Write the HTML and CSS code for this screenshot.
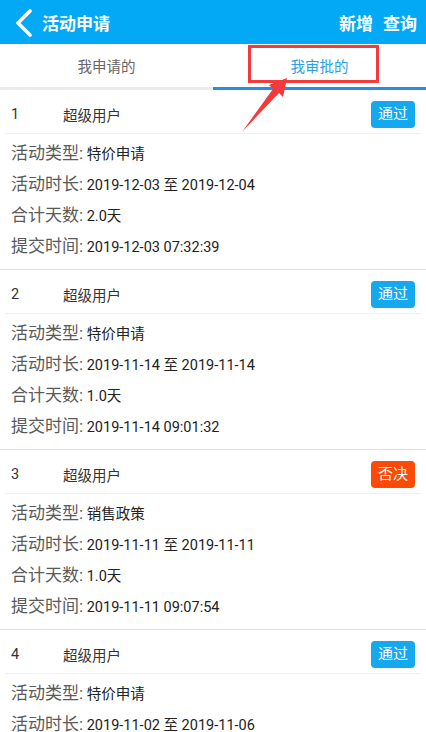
FILE: index.html
```html
<!DOCTYPE html>
<html lang="zh-CN">
<head>
    <meta charset="UTF-8">
    <meta name="viewport" content="width=device-width, initial-scale=1.0">
    <title>活动申请</title>
    <link rel="stylesheet" href="styles.css">
</head>
<body>
    <div id="top-bar">
        <div class="title">
            <svg class="back" width="20" height="28" viewBox="0 0 20 28">
                <path d="M16 2 L4 14 L16 26" fill="none" stroke="#fff" stroke-width="3.6" stroke-linecap="round" stroke-linejoin="round"/>
            </svg>
            <span>活动申请</span>
        </div>
        <div class="actions">
            <span>新增</span>
            <span>查询</span>
        </div>
    </div>

    <div id="tabs">
        <div class="tab">我申请的</div>
        <div class="tab active">我审批的</div>
    </div>

    <div id="list">
        <div class="card">
            <div class="card-head">
                <span class="num">1</span>
                <span class="user">超级用户</span>
                <span class="badge pass">通过</span>
            </div>
            <div class="card-body">
                <div class="row"><span class="label">活动类型:</span> 特价申请</div>
                <div class="row"><span class="label">活动时长:</span> 2019-12-03 至 2019-12-04</div>
                <div class="row"><span class="label">合计天数:</span> 2.0天</div>
                <div class="row"><span class="label">提交时间:</span> 2019-12-03 07:32:39</div>
            </div>
        </div>
        <div class="card">
            <div class="card-head">
                <span class="num">2</span>
                <span class="user">超级用户</span>
                <span class="badge pass">通过</span>
            </div>
            <div class="card-body">
                <div class="row"><span class="label">活动类型:</span> 特价申请</div>
                <div class="row"><span class="label">活动时长:</span> 2019-11-14 至 2019-11-14</div>
                <div class="row"><span class="label">合计天数:</span> 1.0天</div>
                <div class="row"><span class="label">提交时间:</span> 2019-11-14 09:01:32</div>
            </div>
        </div>
        <div class="card">
            <div class="card-head">
                <span class="num">3</span>
                <span class="user">超级用户</span>
                <span class="badge reject">否决</span>
            </div>
            <div class="card-body">
                <div class="row"><span class="label">活动类型:</span> 销售政策</div>
                <div class="row"><span class="label">活动时长:</span> 2019-11-11 至 2019-11-11</div>
                <div class="row"><span class="label">合计天数:</span> 1.0天</div>
                <div class="row"><span class="label">提交时间:</span> 2019-11-11 09:07:54</div>
            </div>
        </div>
        <div class="card">
            <div class="card-head">
                <span class="num">4</span>
                <span class="user">超级用户</span>
                <span class="badge pass">通过</span>
            </div>
            <div class="card-body">
                <div class="row"><span class="label">活动类型:</span> 特价申请</div>
                <div class="row"><span class="label">活动时长:</span> 2019-11-02 至 2019-11-06</div>
            </div>
        </div>
    </div>

    <!-- annotation over the screenshot -->
    <div class="mark-box"></div>
    <svg class="mark-arrow" width="60" height="60" viewBox="0 0 60 60">
        <polygon points="47,1 29,8 33,12 2,55 39,16 43,20" fill="#f23a3a"/>
    </svg>
</body>
</html>
```

FILE: styles.css
```css
body {
    margin: 0;
    padding: 0;
    background: #fff;
    font-family: Roboto, "Noto Sans CJK SC", sans-serif;
    width: 426px;
    height: 732px;
    overflow: hidden;
    position: relative;
}
#top-bar {
    height: 44px;
    background: #03a9f4;
    display: flex;
    align-items: center;
    justify-content: space-between;
    padding: 0 9px 0 14px;
    color: #fff;
    font-size: 17px;
    font-weight: bold;
}
.title {
    display: flex;
    align-items: center;
    gap: 8px;
}
.back {
    margin-top: 1px;
}
.actions {
    display: flex;
    gap: 10px;
}
#tabs {
    display: flex;
    height: 46px;
}
.tab {
    flex: 1;
    display: flex;
    align-items: center;
    justify-content: center;
    font-size: 14.5px;
    color: #666;
    border-bottom: 3px solid #e8ecef;
}
.tab.active {
    color: #29a2e6;
    border-bottom: 3px solid #2a8de0;
}
.card {
    border-bottom: 1px solid #dedede;
}
.card-head {
    margin: 0 5px;
    padding: 11px 6px 5px;
    display: flex;
    align-items: center;
    border-bottom: 1px solid #edf1f3;
    font-size: 14.5px;
    color: #333;
}
.num {
    width: 52px;
}
.user {
    flex: 1;
}
.badge {
    height: 27px;
    line-height: 27px;
    padding: 0 7px;
    border-radius: 4px;
    color: #fff;
    font-size: 15px;
}
.pass {
    background: #16a8ef;
}
.reject {
    background: #fd4a07;
}
.card-body {
    padding: 4px 11px 7px;
}
.row {
    height: 31px;
    line-height: 31px;
    font-size: 14.5px;
    color: #222;
}
.label {
    font-size: 17px;
    color: #5a5a5a;
}
.mark-box {
    position: absolute;
    left: 248px;
    top: 45px;
    width: 125px;
    height: 32px;
    border: 3px solid #f23c3c;
}
.mark-arrow {
    position: absolute;
    left: 240px;
    top: 77px;
}
```
